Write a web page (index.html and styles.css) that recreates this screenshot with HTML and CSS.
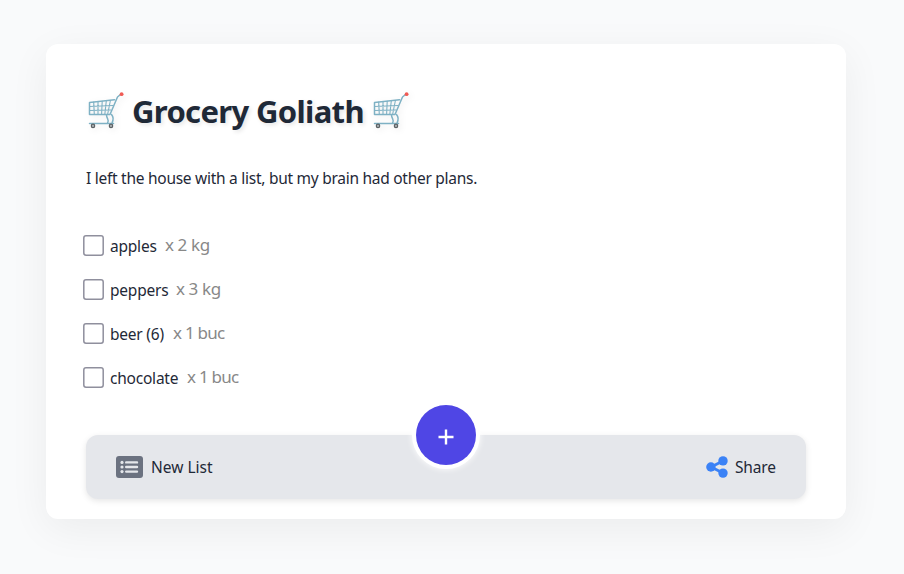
FILE: index.html
```html
<!DOCTYPE html>
<html lang="en">
<head>
<meta charset="utf-8">
<title>Grocery Goliath</title>
<link rel="stylesheet" href="styles.css">
</head>
<body>
<svg width="0" height="0" class="defs" aria-hidden="true">
  <symbol id="cart" viewBox="0 0 38 38">
    <g fill="none" stroke="#7eb1c4" stroke-width="1.500" stroke-linecap="round" stroke-linejoin="round">
      <path d="M34.500 2.500 31.500 5 24 22.500H3.500V10.500L28.500 7.800"/>
      <path d="M3.500 14.500 26.800 13.500M3.500 18.500 25 18M7.700 10.100 8.300 22.500M12 9.700V22.500M16.200 9.200 15.600 22.500M20.300 8.800 18.800 22.500M24.400 8.500 21.600 22.500" stroke-width="1.100"/>
      <path d="M20.500 23C20.500 27 24 28 21.500 31M25.500 22.500C28.500 26 27 29 26 31M3.500 31.500H27.500"/>
    </g>
    <circle cx="35.600" cy="2.200" r="1.900" fill="#f05b55"/>
    <circle cx="7" cy="33.900" r="1.700" fill="#a9b0b3" stroke="#5d6265" stroke-width="1.200"/>
    <circle cx="25" cy="33.900" r="1.700" fill="#a9b0b3" stroke="#5d6265" stroke-width="1.200"/>
  </symbol>
  <symbol id="box" viewBox="0 0 21 21">
    <rect x=".8" y=".8" width="19.400" height="19.400" rx="2.200" fill="#fff" stroke="#8f8f9d" stroke-width="1.500"/>
  </symbol>
</svg>
<main class="card">
  <h1 class="title">
    <svg class="cart"><use href="#cart"/></svg>
    <span class="name">Grocery Goliath</span>
    <svg class="cart"><use href="#cart"/></svg>
  </h1>
  <p class="intro">I left the house with a list, but my brain had other plans.</p>
  <ul class="items">
    <li><svg class="box"><use href="#box"/></svg><span class="item apples">apples</span><span class="qty">x 2 kg</span></li>
    <li><svg class="box"><use href="#box"/></svg><span class="item peppers">peppers</span><span class="qty">x 3 kg</span></li>
    <li><svg class="box"><use href="#box"/></svg><span class="item beer">beer (6)</span><span class="qty one">x 1 buc</span></li>
    <li><svg class="box"><use href="#box"/></svg><span class="item chocolate">chocolate</span><span class="qty one">x 1 buc</span></li>
  </ul>
  <footer class="bar">
    <div class="action">
      <svg class="list-icon" viewBox="0 0 27 22"><rect width="27" height="22" rx="3" fill="#6b7280"/><g stroke="#e5e7eb" stroke-width="2.400" stroke-linecap="round"><path d="M10.200 6.400H21M10.200 11H21M10.200 15.600H21"/></g><g fill="#e5e7eb"><circle cx="6" cy="6.400" r="1.600"/><circle cx="6" cy="11" r="1.600"/><circle cx="6" cy="15.600" r="1.600"/></g></svg>
      <span class="new">New List</span>
    </div>
    <div class="action">
      <svg class="share-icon" viewBox="0 0 22 22"><path d="M17 5 5 11 17 17" fill="none" stroke="#3b82f6" stroke-width="2.800"/><g fill="#3b82f6"><circle cx="17" cy="4.900" r="4.700"/><circle cx="4.900" cy="11" r="4.700"/><circle cx="17" cy="17.100" r="4.700"/></g></svg>
      <span class="share">Share</span>
    </div>
    <button class="add" aria-label="Add"><svg viewBox="0 0 16 16"><path d="M8 .5V15.500M.5 8H15.500" stroke="#fff" stroke-width="2.400"/></svg></button>
  </footer>
</main>
</body>
</html>
```
FILE: styles.css
```css
* { box-sizing: border-box; }
body {
  margin: 0;
  padding: 44px 58px 0 46px;
  height: 574px;
  overflow: hidden;
  background: #f9fafb;
  color: #1f2937;
  font: 15.5px/24px "Noto Sans", "Open Sans", sans-serif;
}
.defs { position: absolute; }
.card {
  width: 800px;
  height: 475px;
  padding: 40px 40px 20px;
  border-radius: 12px;
  background: #fff;
  box-shadow: 0 10px 40px rgba(0, 0, 0, .06);
}
.title {
  display: flex;
  align-items: center;
  height: 54px;
  margin: 0;
  font-size: 31px;
  line-height: 54px;
}
.cart { width: 38px; height: 38px; flex: none; filter: drop-shadow(2px 2px 3px rgba(0, 0, 0, .07)); }
.name { width: 231px; margin: 0 8px 0 8px; white-space: nowrap; letter-spacing: -.65px; text-shadow: 2px 2px 4px rgba(0, 0, 0, .1); }
.intro { margin: 28px 0 0; white-space: nowrap; letter-spacing: -.27px; }
.items { margin: 33px 0 0; padding: 0; list-style: none; }
.items li { display: flex; align-items: center; height: 44px; margin-left: -3px; }
.box { width: 21px; height: 21px; margin-right: 6px; flex: none; }
.item { position: relative; top: 1px; margin-right: 8px; letter-spacing: -.22px; white-space: nowrap; }
.apples { width: 47px; }
.peppers { width: 58px; }
.beer { width: 55px; }
.chocolate { width: 69px; }
.qty { color: #888; font-size: 17px; letter-spacing: -.4px; white-space: nowrap; }
.one { letter-spacing: -.75px; }
.bar {
  position: relative;
  display: flex;
  align-items: center;
  justify-content: space-between;
  height: 64px;
  margin-top: 36px;
  padding: 0 30px;
  border-radius: 12px;
  background: #e5e7eb;
  box-shadow: 0 2px 6px rgba(0, 0, 0, .1);
}
.action { display: flex; align-items: center; gap: 8px; }
.list-icon { width: 27px; height: 22px; }
.share-icon { width: 22px; height: 22px; margin-right: -1px; }
.new { width: 62px; white-space: nowrap; letter-spacing: 0; }
.share { width: 41px; white-space: nowrap; letter-spacing: -.15px; }
.add {
  position: absolute;
  left: 330px;
  top: -30px;
  display: flex;
  align-items: center;
  justify-content: center;
  width: 60px;
  height: 60px;
  padding: 4px 0 0;
  border: 0;
  border-radius: 50%;
  background: #4f46e5;
  box-shadow: 0 0 0 4px #fff, 0 0 6px 4px #fff;
}
.add svg { width: 16px; height: 16px; }
```
